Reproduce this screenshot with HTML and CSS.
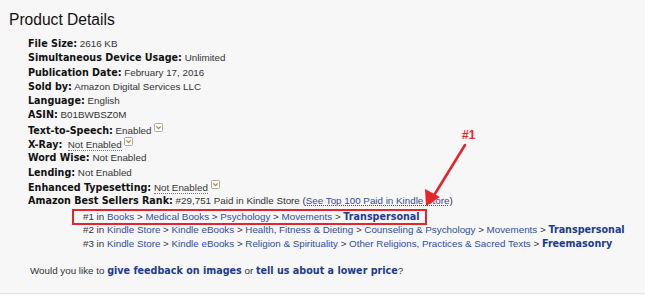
FILE: index.html
```html
<!DOCTYPE html>
<html lang="en">
<head>
  <meta charset="UTF-8">
  <title>Product Details</title>
  <link rel="stylesheet" href="styles.css">
</head>
<body>
  <div class="page">
    <h2 class="title">Product Details</h2>

    <ul class="details">
      <li><b>File Size:</b> 2616 KB</li>
      <li><b>Simultaneous Device Usage:</b> Unlimited</li>
      <li><b>Publication Date:</b> February 17, 2016</li>
      <li><b>Sold by:</b> Amazon Digital Services LLC</li>
      <li><b>Language:</b> English</li>
      <li><b>ASIN:</b> B01BWBSZ0M</li>
      <li><b>Text-to-Speech:</b> Enabled <span class="pop"><svg viewBox="0 0 9 9" width="9" height="9"><rect x="0.5" y="0.5" width="8" height="8" rx="1" fill="#fff" stroke="#a9a9a9"/><path d="M2.3 3.4 L4.5 5.6 L6.7 3.4" fill="none" stroke="#c47a1a" stroke-width="1.2"/></svg></span></li>
      <li><b>X-Ray:</b> &nbsp;<span class="dotted">Not Enabled</span> <span class="pop"><svg viewBox="0 0 9 9" width="9" height="9"><rect x="0.5" y="0.5" width="8" height="8" rx="1" fill="#fff" stroke="#a9a9a9"/><path d="M2.3 3.4 L4.5 5.6 L6.7 3.4" fill="none" stroke="#c47a1a" stroke-width="1.2"/></svg></span></li>
      <li><b>Word Wise:</b> Not Enabled</li>
      <li><b>Lending:</b> Not Enabled</li>
      <li><b>Enhanced Typesetting:</b> <span class="dotted">Not Enabled</span> <span class="pop"><svg viewBox="0 0 9 9" width="9" height="9"><rect x="0.5" y="0.5" width="8" height="8" rx="1" fill="#fff" stroke="#a9a9a9"/><path d="M2.3 3.4 L4.5 5.6 L6.7 3.4" fill="none" stroke="#c47a1a" stroke-width="1.2"/></svg></span></li>
      <li>
        <b>Amazon Best Sellers Rank:</b> #29,751 Paid in Kindle Store (<a class="see" href="#">See Top 100 Paid in Kindle Store</a>)
        <ul class="ranks">
          <li><span class="marked">#1 in <a href="#">Books</a> &gt; <a href="#">Medical Books</a> &gt; <a href="#">Psychology</a> &gt; <a href="#">Movements</a> &gt; <a class="strong" href="#">Transpersonal</a></span></li>
          <li>#2 in <a href="#">Kindle Store</a> &gt; <a href="#">Kindle eBooks</a> &gt; <a href="#">Health, Fitness &amp; Dieting</a> &gt; <a href="#">Counseling &amp; Psychology</a> &gt; <a href="#">Movements</a> &gt; <a class="strong" href="#">Transpersonal</a></li>
          <li>#3 in <a href="#">Kindle Store</a> &gt; <a href="#">Kindle eBooks</a> &gt; <a href="#">Religion &amp; Spirituality</a> &gt; <a href="#">Other Religions, Practices &amp; Sacred Texts</a> &gt; <a class="strong" href="#">Freemasonry</a></li>
        </ul>
      </li>
    </ul>

    <p class="feedback">Would you like to <a class="strong" href="#">give feedback on images</a> or <a class="strong" href="#">tell us about a lower price</a>?</p>
  </div>

  <!-- annotation -->
  <span class="callout">#1</span>
  <svg class="arrow" viewBox="0 0 645 295" width="645" height="295">
    <line x1="465" y1="145" x2="433" y2="197" stroke="#e3262d" stroke-width="2.6" stroke-linecap="round"/>
    <polygon points="426,206 425,189 440,197" fill="#e3262d"/>
  </svg>
</body>
</html>
```

FILE: styles.css
```css
* { box-sizing: border-box; }

body {
  margin: 0;
  background: #f7f7f7;
  font-family: 'Liberation Sans', Arial, sans-serif;
  font-size: 9.8px;
  color: #333;
  position: relative;
  height: 295px;
  overflow: hidden;
}

.page {
  padding: 10px 0 0 9px;
  height: 294px;
  border-bottom: 1px solid #e4e4e4;
}

.title {
  margin: 0 0 7px;
  font-size: 15.6px;
  font-weight: normal;
  color: #111;
  line-height: 20px;
}

.details, .ranks {
  list-style: none;
  margin: 0;
  padding: 0;
}

.details {
  padding-left: 19px;
}

.details li {
  height: 14.3px;
  line-height: 14.3px;
  white-space: nowrap;
}

.details li:last-child {
  height: auto;
}

.details b {
  font-family: 'DejaVu Sans', Verdana, sans-serif;
  font-size: 9.6px;
  font-weight: bold;
  color: #111;
}

.dotted {
  border-bottom: 1px dotted #777;
}

.pop svg {
  vertical-align: 2px;
}

a {
  color: #2b4f9e;
  text-decoration: none;
}

a.see {
  text-decoration: underline;
  text-decoration-style: dotted;
}

a.strong {
  font-family: 'DejaVu Sans', Verdana, sans-serif;
  font-size: 9.6px;
  font-weight: bold;
  color: #1d3b8c;
}

.ranks {
  padding-left: 55px;
}

.marked {
  display: inline-block;
  border: 2px solid #e3262d;
  margin-left: -11px;
  padding: 0 5px 0 9px;
  line-height: 12.3px;
}

.feedback {
  margin: 13px 0 0 21px;
  line-height: 14px;
}

.callout {
  position: absolute;
  left: 462px;
  top: 128px;
  font-family: 'Liberation Sans', Arial, sans-serif;
  font-weight: bold;
  font-size: 12px;
  color: #e3262d;
}

.arrow {
  position: absolute;
  left: 0;
  top: 0;
  pointer-events: none;
}
```
